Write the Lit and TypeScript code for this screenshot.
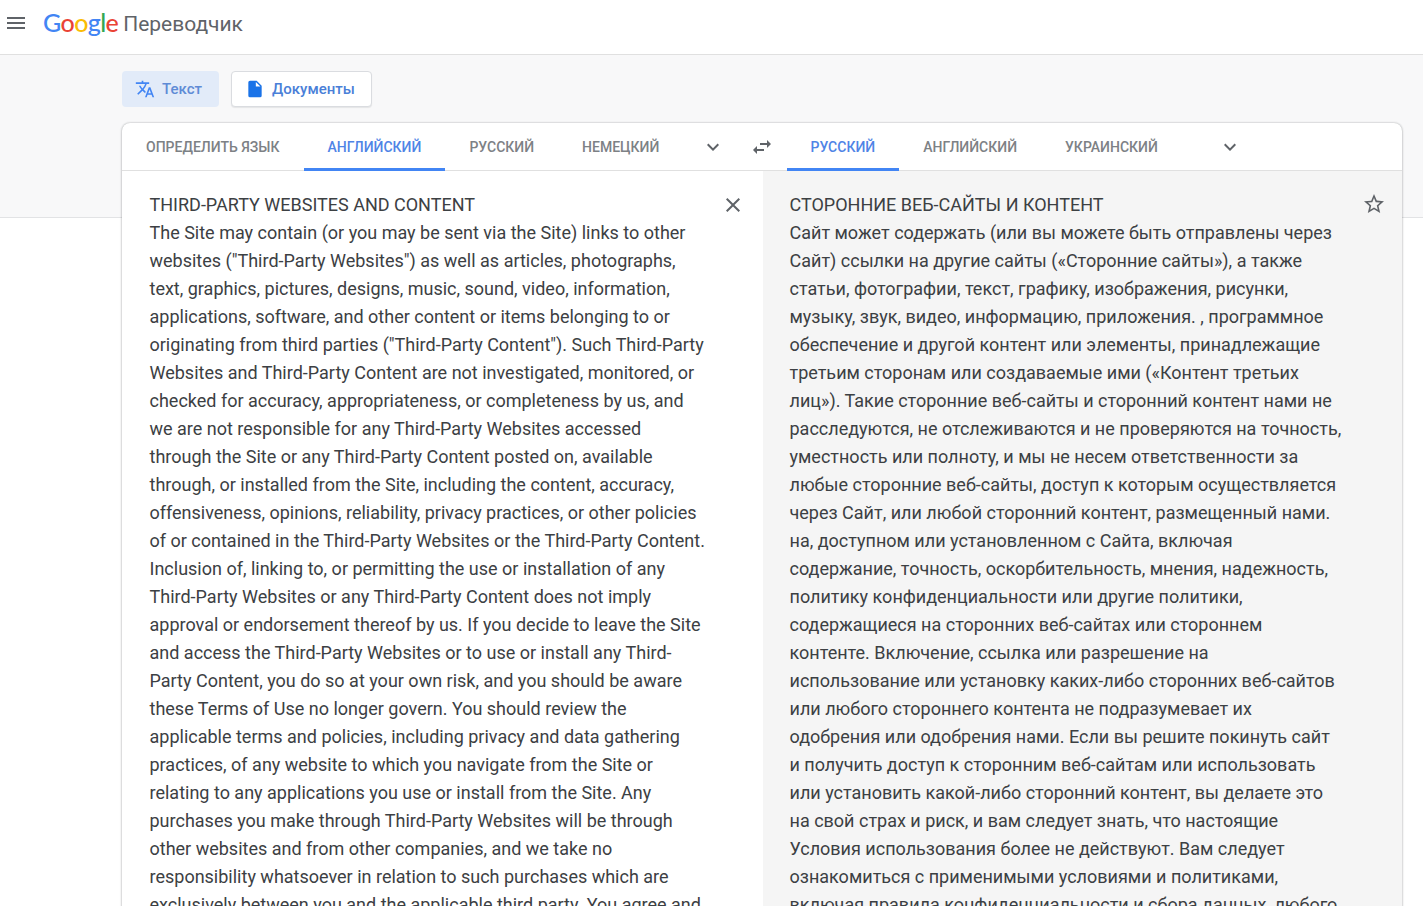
import { LitElement, html, css } from "lit";
import { customElement } from "lit/decorators.js";

const SOURCE = [
  "THIRD-PARTY WEBSITES AND CONTENT",
  "The Site may contain (or you may be sent via the Site) links to other",
  'websites ("Third-Party Websites") as well as articles, photographs,',
  "text, graphics, pictures, designs, music, sound, video, information,",
  "applications, software, and other content or items belonging to or",
  'originating from third parties ("Third-Party Content"). Such Third-Party',
  "Websites and Third-Party Content are not investigated, monitored, or",
  "checked for accuracy, appropriateness, or completeness by us, and",
  "we are not responsible for any Third-Party Websites accessed",
  "through the Site or any Third-Party Content posted on, available",
  "through, or installed from the Site, including the content, accuracy,",
  "offensiveness, opinions, reliability, privacy practices, or other policies",
  "of or contained in the Third-Party Websites or the Third-Party Content.",
  "Inclusion of, linking to, or permitting the use or installation of any",
  "Third-Party Websites or any Third-Party Content does not imply",
  "approval or endorsement thereof by us. If you decide to leave the Site",
  "and access the Third-Party Websites or to use or install any Third-",
  "Party Content, you do so at your own risk, and you should be aware",
  "these Terms of Use no longer govern. You should review the",
  "applicable terms and policies, including privacy and data gathering",
  "practices, of any website to which you navigate from the Site or",
  "relating to any applications you use or install from the Site. Any",
  "purchases you make through Third-Party Websites will be through",
  "other websites and from other companies, and we take no",
  "responsibility whatsoever in relation to such purchases which are",
  "exclusively between you and the applicable third party. You agree and",
];

const TARGET = [
  "СТОРОННИЕ ВЕБ-САЙТЫ И КОНТЕНТ",
  "Сайт может содержать (или вы можете быть отправлены через",
  "Сайт) ссылки на другие сайты («Сторонние сайты»), а также",
  "статьи, фотографии, текст, графику, изображения, рисунки,",
  "музыку, звук, видео, информацию, приложения. , программное",
  "обеспечение и другой контент или элементы, принадлежащие",
  "третьим сторонам или создаваемые ими («Контент третьих",
  "лиц»). Такие сторонние веб-сайты и сторонний контент нами не",
  "расследуются, не отслеживаются и не проверяются на точность,",
  "уместность или полноту, и мы не несем ответственности за",
  "любые сторонние веб-сайты, доступ к которым осуществляется",
  "через Сайт, или любой сторонний контент, размещенный нами.",
  "на, доступном или установленном с Сайта, включая",
  "содержание, точность, оскорбительность, мнения, надежность,",
  "политику конфиденциальности или другие политики,",
  "содержащиеся на сторонних веб-сайтах или стороннем",
  "контенте. Включение, ссылка или разрешение на",
  "использование или установку каких-либо сторонних веб-сайтов",
  "или любого стороннего контента не подразумевает их",
  "одобрения или одобрения нами. Если вы решите покинуть сайт",
  "и получить доступ к сторонним веб-сайтам или использовать",
  "или установить какой-либо сторонний контент, вы делаете это",
  "на свой страх и риск, и вам следует знать, что настоящие",
  "Условия использования более не действуют. Вам следует",
  "ознакомиться с применимыми условиями и политиками,",
  "включая правила конфиденциальности и сбора данных, любого",
];

const chevron = html`<svg class="chev" viewBox="0 0 24 24" width="24" height="24"><path d="M7.41 8.59 12 13.17l4.59-4.58L18 10l-6 6-6-6z" fill="#5f6368"/></svg>`;

@customElement("app-root")
export class AppRoot extends LitElement {
  static styles = css`
    :host {
      display: block;
      height: 906px;
      overflow: hidden;
      background: #fff;
      font-family: Roboto, "Liberation Sans", sans-serif;
    }
    .header {
      height: 54px;
      display: flex;
      align-items: center;
      border-bottom: 1px solid #e0e0e0;
      box-sizing: content-box;
      padding-left: 4px;
    }
    .burger { margin-top: -9px; flex: none; }
    .logo {
      margin-left: 15px;
      margin-top: -9px;
      font-family: Lato, sans-serif;
      font-size: 25px;
      font-weight: 500;
      letter-spacing: -0.6px;
      line-height: 30px;
      white-space: nowrap;
    }
    .b { color: #4285f4; } .r { color: #ea4335; } .y { color: #fbbc05; } .g { color: #34a853; }
    .product {
      margin-left: 5px;
      font-family: Roboto, sans-serif;
      font-size: 21px;
      font-weight: 400;
      letter-spacing: 0;
      color: #5f6368;
      vertical-align: 1px;
    }
    .main {
      padding: 16px 20px 0 121px;
      background: linear-gradient(#f8f8f9 162px, #e2e3e5 162px, #e2e3e5 163px, #fff 163px);
    }
    .modes { display: flex; gap: 12px; margin-left: 1px; height: 36px; }
    .mode {
      display: flex;
      align-items: center;
      gap: 7px;
      box-sizing: border-box;
      height: 36px;
      border-radius: 4px;
      font-size: 15px;
      font-weight: 500;
      color: #4a7fd8;
    }
    .mode.active { width: 97px; padding-left: 13px; background: #e2ebf9; color: #5f8bd6; }
    .mode.doc {
      width: 141px;
      padding-left: 13px;
      background: #fff;
      border: 1px solid #dadce0;
      box-shadow: 0 1px 1px rgba(60, 64, 67, 0.1);
    }
    .card {
      margin-top: 16px;
      background: #fff;
      border-radius: 8px 8px 0 0;
      box-shadow: 0 0 2px rgba(60, 64, 67, 0.4), 0 1px 3px rgba(60, 64, 67, 0.2);
      width: 1280px;
      margin-left: 1px;
      overflow: hidden;
    }
    .tabs {
      display: grid;
      grid-template-columns: 641px 639px;
      height: 47px;
      border-bottom: 1px solid #e0e0e0;
      box-sizing: content-box;
    }
    .tabgroup { display: flex; align-items: stretch; position: relative; }
    .tab {
      box-sizing: border-box;
      padding: 3px 24px 0;
      display: flex;
      align-items: center;
      font-size: 14px;
      font-weight: 500;
      color: #7d8185;
      white-space: nowrap;
      border-bottom: 3px solid transparent;
      margin-bottom: -1px;
      height: 48px;
    }
    .tab.on { color: #4f84e6; border-bottom-color: #4285f4; }
    .chev { align-self: center; flex: none; }
    .left .chev { margin-left: 18px; }
    .swap { margin-left: 25px; align-self: center; flex: none; }
    .right { padding-left: 23.5px; box-sizing: border-box; }
    .right .chev { margin-left: 36.5px; }
    .panels { display: grid; grid-template-columns: 641px 639px; }
    .panel {
      position: relative;
      padding: 20px 0 0 27.5px;
      height: 800px;
      box-sizing: border-box;
      font-size: 18px;
      line-height: 28px;
      color: #3c4043;
    }
    .panel.tr { background: #f5f5f5; padding-left: 26.5px; }
    .line { white-space: nowrap; }
    .action { position: absolute; }
    .close { right: 18px; top: 22px; }
    .star { right: 16px; top: 21px; }
  `;

  render() {
    return html`
      <div class="header">
        <svg class="burger" viewBox="0 0 24 24" width="24" height="24"><path d="M3 18h18v-2H3v2zm0-5h18v-2H3v2zm0-7v2h18V6H3z" fill="#5f6368"/></svg>
        <div class="logo"><span class="b">G</span><span class="r">o</span><span class="y">o</span><span class="b">g</span><span class="g">l</span><span class="r">e</span><span class="product">Переводчик</span></div>
      </div>
      <div class="main">
        <div class="modes">
          <div class="mode active">
            <svg viewBox="0 0 24 24" width="20" height="20"><path d="M12.87 15.07l-2.54-2.51.03-.03A17.52 17.52 0 0 0 14.07 6H17V4h-7V2H8v2H1v1.99h11.17C11.5 7.92 10.44 9.75 9 11.35 8.07 10.32 7.3 9.19 6.69 8h-2c.73 1.63 1.73 3.17 2.98 4.56l-5.09 5.02L4 19l5-5 3.11 3.11.76-2.04zM18.5 10h-2L12 22h2l1.12-3h4.75L21 22h2l-4.5-12zm-2.62 7l1.62-4.33L19.12 17h-3.24z" fill="#4285f4"/></svg>
            <span>Текст</span>
          </div>
          <div class="mode doc">
            <svg viewBox="0 0 24 24" width="20" height="20"><path d="M6 2a2 2 0 0 0-2 2v16a2 2 0 0 0 2 2h12a2 2 0 0 0 2-2V8l-6-6H6zm7 7V3.5L18.5 9H13z" fill="#1a73e8"/></svg>
            <span>Документы</span>
          </div>
        </div>
        <div class="card">
          <div class="tabs">
            <div class="tabgroup left">
              <div class="tab">ОПРЕДЕЛИТЬ ЯЗЫК</div>
              <div class="tab on">АНГЛИЙСКИЙ</div>
              <div class="tab">РУССКИЙ</div>
              <div class="tab">НЕМЕЦКИЙ</div>
              ${chevron}
              <svg class="swap" viewBox="0 0 24 24" width="24" height="24"><path d="M6.99 11 3 15l3.99 4v-3H14v-2H6.99v-3zM21 9l-3.99-4v3H10v2h7.01v3L21 9z" fill="#5f6368"/></svg>
            </div>
            <div class="tabgroup right">
              <div class="tab on">РУССКИЙ</div>
              <div class="tab">АНГЛИЙСКИЙ</div>
              <div class="tab">УКРАИНСКИЙ</div>
              ${chevron}
            </div>
          </div>
          <div class="panels">
            <div class="panel">
              ${SOURCE.map((l) => html`<div class="line">${l}</div>`)}
              <svg class="action close" viewBox="0 0 24 24" width="24" height="24"><path d="M19 6.41 17.59 5 12 10.59 6.41 5 5 6.41 10.59 12 5 17.59 6.41 19 12 13.41 17.59 19 19 17.59 13.41 12z" fill="#5f6368"/></svg>
            </div>
            <div class="panel tr">
              ${TARGET.map((l) => html`<div class="line">${l}</div>`)}
              <svg class="action star" viewBox="0 0 24 24" width="24" height="24"><path d="M22 9.24l-7.19-.62L12 2 9.19 8.63 2 9.24l5.46 4.73L5.82 21 12 17.27 18.18 21l-1.63-7.03L22 9.24zM12 15.4l-3.76 2.27 1-4.28-3.32-2.88 4.38-.38L12 6.1l1.71 4.04 4.38.38-3.32 2.88 1 4.28L12 15.4z" fill="#5f6368"/></svg>
            </div>
          </div>
        </div>
      </div>
    `;
  }
}
